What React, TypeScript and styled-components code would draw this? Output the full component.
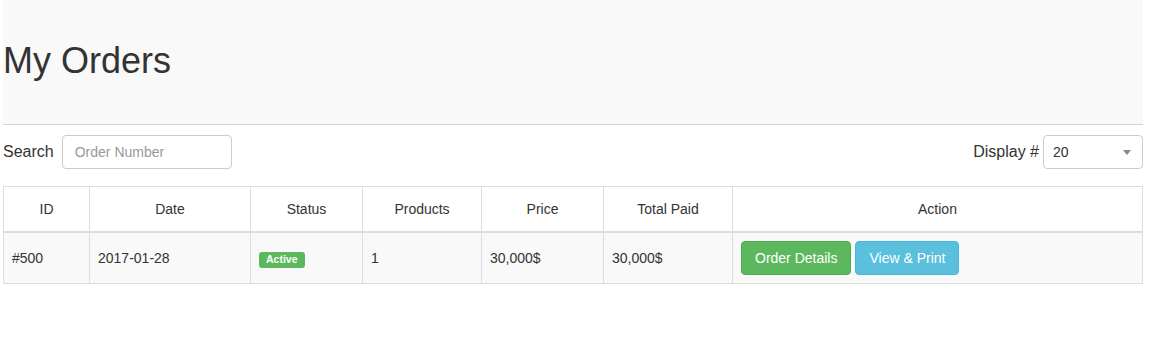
import React from 'react';
import styled, { createGlobalStyle } from 'styled-components';

const GlobalStyle = createGlobalStyle`
  body {
    margin: 0;
    background: #fff;
    font-family: 'Liberation Sans', Arial, sans-serif;
    font-size: 14px;
    line-height: 20px;
    color: #333;
  }
  * { box-sizing: border-box; }
`;

const Page = styled.div`
  width: 1140px;
  margin-left: 3px;
`;

const Header = styled.div`
  height: 125px;
  padding-top: 41px;
  background: #f9f9f9;
  border-bottom: 1px solid #d4d4d4;
`;

const Title = styled.h1`
  margin: 0;
  font-size: 36px;
  font-weight: 400;
  line-height: 1.1;
  color: #333;
`;

const Toolbar = styled.div`
  display: flex;
  justify-content: space-between;
  align-items: center;
  margin-top: 10px;
`;

const Field = styled.label<{ $gap: number }>`
  display: flex;
  align-items: center;
  gap: ${p => p.$gap}px;
  font-size: 16px;
`;

const Input = styled.input`
  width: 170px;
  height: 34px;
  padding: 6px 12px;
  border: 1px solid #ccc;
  border-radius: 4px;
  font-family: inherit;
  font-size: 14px;
  color: #555;
  &::placeholder { color: #999; }
`;

const SelectBox = styled.div`
  position: relative;
  width: 100px;
  height: 34px;
  &::after {
    content: '';
    position: absolute;
    right: 12px;
    top: 15px;
    border-left: 4px solid transparent;
    border-right: 4px solid transparent;
    border-top: 5px solid #888;
    pointer-events: none;
  }
`;

const Select = styled.select`
  appearance: none;
  width: 100%;
  height: 100%;
  padding: 6px 9px;
  border: 1px solid #ccc;
  border-radius: 4px;
  background: #fff;
  font-family: inherit;
  font-size: 14px;
  color: #333;
`;

const Table = styled.table`
  width: 100%;
  margin-top: 17px;
  border-collapse: collapse;
  table-layout: fixed;
  border: 1px solid #ddd;
`;

const Th = styled.th`
  padding: 12px 8px;
  font-weight: 400;
  line-height: 20px;
  text-align: center;
  border: 1px solid #ddd;
  border-bottom: 2px solid #ddd;
`;

const Td = styled.td`
  padding: 8px;
  line-height: 20px;
  border: 1px solid #ddd;
  background: #f9f9f9;
  vertical-align: middle;
`;

const Badge = styled.span`
  display: inline-block;
  padding: 2px 7px 3px;
  border-radius: 3px;
  background: #5cb85c;
  color: #fff;
  font-size: 10.5px;
  font-weight: 700;
  line-height: 1;
`;

const Button = styled.button<{ $tone: 'success' | 'info' }>`
  display: inline-block;
  vertical-align: middle;
  height: 34px;
  padding: 6px 13px;
  margin-right: 4px;
  border-radius: 4px;
  border: 1px solid ${p => (p.$tone === 'success' ? '#4cae4c' : '#46b8da')};
  background: ${p => (p.$tone === 'success' ? '#5cb85c' : '#5bc0de')};
  color: #fff;
  font-family: inherit;
  font-size: 14px;
  line-height: 20px;
`;

const columns = [
  { label: 'ID', width: 86 },
  { label: 'Date', width: 161 },
  { label: 'Status', width: 112 },
  { label: 'Products', width: 119 },
  { label: 'Price', width: 122 },
  { label: 'Total Paid', width: 129 },
  { label: 'Action' },
];

const App = () => (
  <Page>
    <GlobalStyle />
    <Header>
      <Title>My Orders</Title>
    </Header>
    <Toolbar>
      <Field $gap={8}>
        Search
        <Input placeholder="Order Number" />
      </Field>
      <Field $gap={4}>
        Display #
        <SelectBox>
          <Select defaultValue="20">
            <option>10</option>
            <option>20</option>
            <option>50</option>
          </Select>
        </SelectBox>
      </Field>
    </Toolbar>
    <Table>
      <colgroup>
        {columns.map(col => (
          <col key={col.label} style={col.width ? { width: col.width } : undefined} />
        ))}
      </colgroup>
      <thead>
        <tr>
          {columns.map(col => (
            <Th key={col.label}>{col.label}</Th>
          ))}
        </tr>
      </thead>
      <tbody>
        <tr>
          <Td>#500</Td>
          <Td>2017-01-28</Td>
          <Td>
            <Badge>Active</Badge>
          </Td>
          <Td>1</Td>
          <Td>30,000$</Td>
          <Td>30,000$</Td>
          <Td>
            <Button $tone="success">Order Details</Button>
            <Button $tone="info">View &amp; Print</Button>
          </Td>
        </tr>
      </tbody>
    </Table>
  </Page>
);

export default App;
